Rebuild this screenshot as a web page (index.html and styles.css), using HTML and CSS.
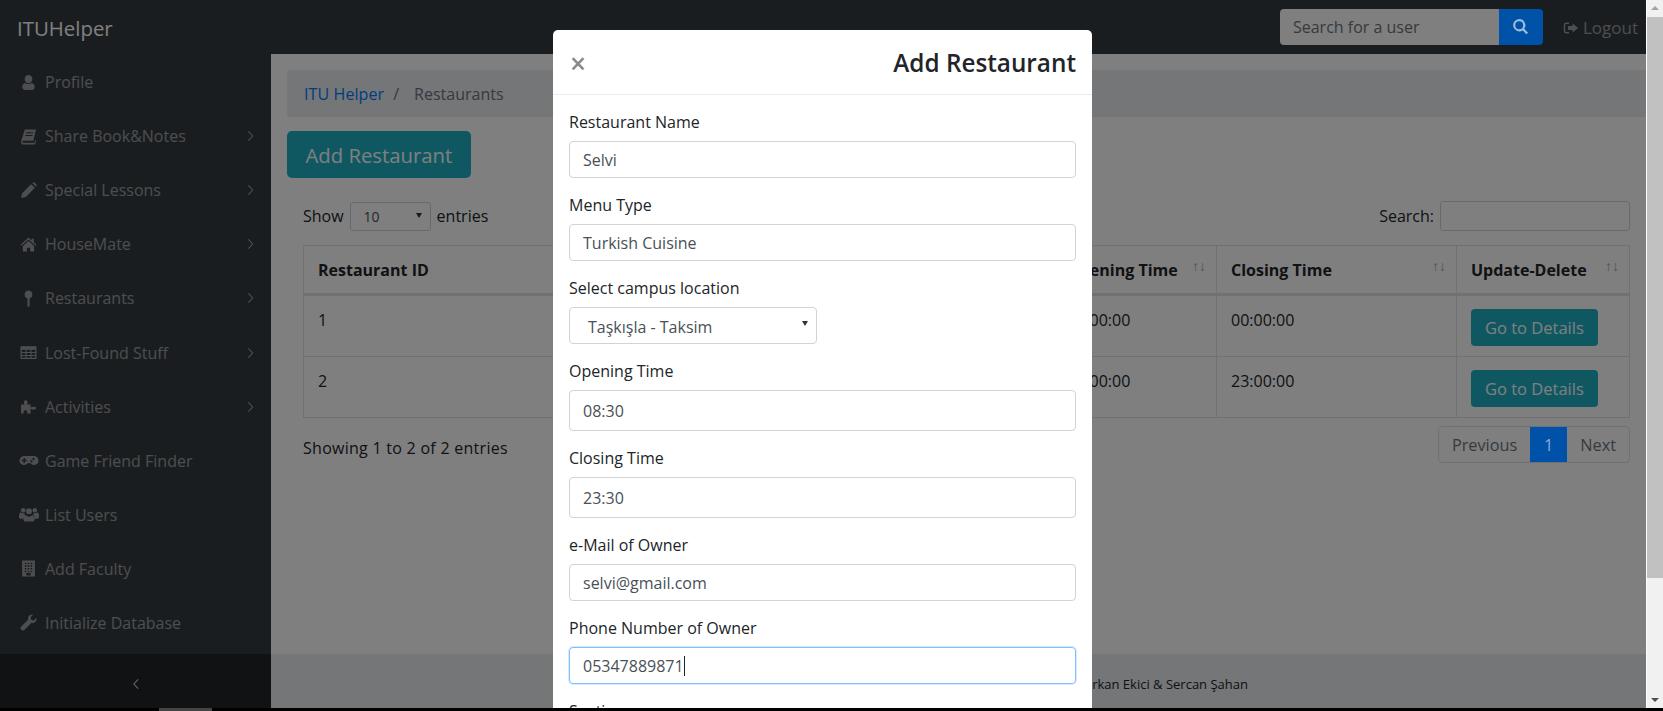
FILE: index.html
```html
<!DOCTYPE html>
<html lang="en">
<head>
    <meta charset="UTF-8">
    <meta name="viewport" content="width=device-width, initial-scale=1.0">
    <title>ITUHelper</title>
    <link rel="stylesheet" href="styles.css">
</head>
<body>
    <svg class="icon-defs" aria-hidden="true">
        <defs>
            <symbol id="i-user" viewBox="0 0 16 16"><path d="M8 1a3.6 3.6 0 0 1 3.6 3.8A3.6 3.6 0 0 1 8 8.6a3.6 3.6 0 0 1-3.6-3.8A3.6 3.6 0 0 1 8 1zM5 8.4c.8.7 1.9 1.1 3 1.1s2.200-.4 3-1.100c1.800.2 2.800 1.500 2.800 3.800 0 1.500-.9 2.800-2.300 2.800H4.500c-1.400 0-2.300-1.300-2.300-2.800 0-2.300 1-3.600 2.800-3.800z"/></symbol>
            <symbol id="i-book" viewBox="0 0 16 16"><path d="M4.500 1.500h10.500l-2.400 10.500H3.300c-.8 0-1.200.5-1.200 1s.4.900 1.200.9h10.400l.6-2.500.8.600-1 3.500H3C1.500 15.500.6 14.300 1 12.800zM6 4l-.3 1h6.600l.3-1zM5.300 6.500l-.3 1h6.600l.3-1z"/></symbol>
            <symbol id="i-pencil" viewBox="0 0 16 16"><path d="M1 15l1-4.500L10.500 2l3.500 3.500L5.500 14zM11.500 1l1-.5c.5-.2 1 0 1.300.3l1.400 1.400c.3.300.5.800.3 1.300l-.5 1z"/></symbol>
            <symbol id="i-home" viewBox="0 0 16 16"><path d="M8 1.500l3 2.700V2.500h2v3.500l2.500 2.300-.7.800L8 3.400 1.200 9.100l-.7-.8zM8 4.800l5.300 4.500V14a.6.6 0 0 1-.6.6H9.500v-3.500h-3v3.500H3.300a.6.6 0 0 1-.6-.6V9.300z"/></symbol>
            <symbol id="i-pin" viewBox="0 0 16 16"><path d="M8 .5a3.800 3.800 0 0 1 1 7.400V15c0 .5-.4.800-1 .8s-1-.3-1-.8V7.900A3.800 3.800 0 0 1 8 .5z"/></symbol>
            <symbol id="i-table" viewBox="0 0 16 16"><path d="M.5 2h15v12H.5zM1.700 5.500v2h3.500v-2zm4.500 0v2h3.600v-2zm4.600 0v2h3.500v-2zM1.700 8.500v1.800h3.500V8.500zm4.500 0v1.800h3.600V8.500zm4.600 0v1.800h3.500V8.500zM1.700 11.300v1.600h3.500v-1.600zm4.500 0v1.600h3.600v-1.600zm4.600 0v1.600h3.500v-1.600z" fill-rule="evenodd"/></symbol>
            <symbol id="i-puzzle" viewBox="0 0 16 16"><path d="M1 6h3.300C3.800 5.300 3.700 4.600 3.700 4c0-1 .7-1.800 1.700-1.800S7.100 3 7.100 4c0 .6-.1 1.300-.6 2h3.500v3c.5-.4 1.200-.6 1.900-.6.600 0 1.300-.3 2.100-.1.600.2 1 .7 1 1.300s-.4 1.100-1 1.300c-.8.200-1.500-.1-2.100-.1-.7 0-1.400-.2-1.900-.6v4.300H6.600c.3-.6.400-1.200.2-1.700-.3-.8-1-1.200-1.700-1.200s-1.400.4-1.700 1.200c-.2.500-.1 1.100.2 1.700H1z"/></symbol>
            <symbol id="i-gamepad" viewBox="0 0 20 16"><path fill-rule="evenodd" d="M5.500 3.500h9a5 5 0 0 1 5 4.500 4.500 4.500 0 0 1-8 2.800H8.500a4.500 4.500 0 0 1-8-2.800 5 5 0 0 1 5-4.500zM4.500 5.500v1.700H2.800v1.500h1.700v1.700H6V8.700h1.700V7.200H6V5.500zM14.500 5.300a1.100 1.100 0 1 0 0 2.200 1.100 1.100 0 0 0 0-2.200zM12.500 7.800a1.100 1.100 0 1 0 0 2.200 1.100 1.100 0 0 0 0-2.200z"/></symbol>
            <symbol id="i-users" viewBox="0 0 20 16"><circle cx="4.200" cy="3.800" r="2.300"/><circle cx="15.800" cy="3.800" r="2.300"/><circle cx="10" cy="4.800" r="3"/><path d="M.5 6.800c.4-.6 1-.8 1.500-.7.800.8 2.600 1 3.500.5-.2 1.200.4 2.400 1.100 3-1.500.4-2.500 1.300-2.800 2.600H1.500C.7 12.200 0 11.500 0 10.500c0-1.500.1-2.800.5-3.700zM19.500 6.800c-.4-.6-1-.8-1.500-.7-.8.8-2.600 1-3.500.5.200 1.200-.4 2.400-1.100 3 1.500.4 2.500 1.300 2.800 2.600h2.300c.8 0 1.500-.7 1.500-1.700 0-1.500-.1-2.800-.5-3.700zM6.700 8.500c.9 1.200 2 1.700 3.300 1.700s2.400-.5 3.300-1.700c1.600.2 2.400 1.800 2.400 3.900 0 1.500-.9 2.600-2.300 2.600H6.600c-1.400 0-2.300-1.100-2.300-2.600 0-2.100.8-3.700 2.400-3.900z"/></symbol>
            <symbol id="i-building" viewBox="0 0 16 16"><path fill-rule="evenodd" d="M2 .5h12v15H2zM4.500 2.500v1.500H6V2.500zm2.700 0v1.500h1.600V2.500zm2.800 0v1.500h1.500V2.500zM4.500 5v1.500H6V5zm2.700 0v1.500h1.600V5zM10 5v1.500h1.500V5zM4.500 7.500V9H6V7.500zm2.700 0V9h1.600V7.500zm2.800 0V9h1.500V7.500zM4.500 10v1.500H6V10zm2.700 0v1.500h1.600V10zm2.800 0v1.500h1.500V10zM6 12.300v2.200h4v-2.200z"/></symbol>
            <symbol id="i-wrench" viewBox="0 0 16 16"><path d="M15.500 3.500c.3 1.300 0 2.800-1 3.800-1 1-2.400 1.300-3.700 1L4 15c-.6.700-1.700.7-2.400.1l-.7-.7c-.6-.7-.6-1.800.1-2.400l6.700-6.800c-.3-1.300 0-2.700 1-3.700 1-1 2.500-1.300 3.800-1l-2.500 2.500.5 2.500 2.500.5z"/></symbol>
            <symbol id="i-search" viewBox="0 0 16 16"><path fill-rule="evenodd" d="M6.800 1a5.800 5.800 0 0 1 4.700 9.200l3.600 3.600-1.500 1.500-3.600-3.600A5.800 5.800 0 1 1 6.800 1zm0 2.100a3.700 3.700 0 1 0 0 7.400 3.700 3.700 0 0 0 0-7.400z"/></symbol>
            <symbol id="i-logout" viewBox="0 0 16 16"><path d="M6 2.500v1.500H3.500c-.8 0-1.300.5-1.300 1.300v5.400c0 .8.500 1.300 1.300 1.300H6v1.500H3.500C1.800 13.500.8 12.500.8 10.800V5.200c0-1.700 1-2.700 2.700-2.700zM9.500 3.500L15.200 8l-5.700 4.500V10H5V6h4.500z"/></symbol>
            <symbol id="i-chevron" viewBox="0 0 8 14"><path d="M1.500 1.500L6.500 7l-5 5.500" fill="none" stroke="currentColor" stroke-width="1.300"/></symbol>
        </defs>
    </svg>

    <div class="window">
        <div class="page">
            <header class="navbar">
                <a class="brand">ITUHelper</a>
                <form class="user-search">
                    <input class="user-search-input" type="text" placeholder="Search for a user">
                    <button class="user-search-btn" type="button"><svg><use href="#i-search"/></svg></button>
                </form>
                <a class="logout"><svg><use href="#i-logout"/></svg>Logout</a>
            </header>

            <div class="main">
                <nav class="sidebar">
                    <ul class="side-list">
                        <li class="side-item"><svg class="side-icon"><use href="#i-user"/></svg>Profile</li>
                        <li class="side-item"><svg class="side-icon"><use href="#i-book"/></svg>Share Book&amp;Notes<svg class="side-arrow"><use href="#i-chevron"/></svg></li>
                        <li class="side-item"><svg class="side-icon"><use href="#i-pencil"/></svg>Special Lessons<svg class="side-arrow"><use href="#i-chevron"/></svg></li>
                        <li class="side-item"><svg class="side-icon"><use href="#i-home"/></svg>HouseMate<svg class="side-arrow"><use href="#i-chevron"/></svg></li>
                        <li class="side-item"><svg class="side-icon"><use href="#i-pin"/></svg>Restaurants<svg class="side-arrow"><use href="#i-chevron"/></svg></li>
                        <li class="side-item"><svg class="side-icon"><use href="#i-table"/></svg>Lost-Found Stuff<svg class="side-arrow"><use href="#i-chevron"/></svg></li>
                        <li class="side-item"><svg class="side-icon"><use href="#i-puzzle"/></svg>Activities<svg class="side-arrow"><use href="#i-chevron"/></svg></li>
                        <li class="side-item"><svg class="side-icon side-icon-wide"><use href="#i-gamepad"/></svg>Game Friend Finder</li>
                        <li class="side-item"><svg class="side-icon side-icon-wide"><use href="#i-users"/></svg>List Users</li>
                        <li class="side-item"><svg class="side-icon"><use href="#i-building"/></svg>Add Faculty</li>
                        <li class="side-item"><svg class="side-icon"><use href="#i-wrench"/></svg>Initialize Database</li>
                    </ul>
                    <div class="side-toggle"><svg><use href="#i-chevron"/></svg></div>
                </nav>

                <div class="content">
                    <div class="content-body">
                        <ol class="breadcrumb">
                            <li class="crumb-link">ITU Helper</li>
                            <li class="crumb-sep">/</li>
                            <li class="crumb-current">Restaurants</li>
                        </ol>
                        <button class="btn-add" type="button">Add Restaurant</button>

                        <div class="table-wrap">
                            <div class="table-top">
                                <div class="entries">Show <span class="entries-select">10<i class="caret"></i></span> entries</div>
                                <div class="table-search">Search: <span class="table-search-box"></span></div>
                            </div>
                            <table class="data-table">
                                <thead>
                                    <tr>
                                        <th class="col-id">Restaurant ID</th>
                                        <th class="col-open">Opening Time<span class="sort">↑↓</span></th>
                                        <th class="col-close">Closing Time<span class="sort">↑↓</span></th>
                                        <th class="col-action">Update-Delete<span class="sort">↑↓</span></th>
                                    </tr>
                                </thead>
                                <tbody>
                                    <tr>
                                        <td>1</td>
                                        <td>00:00:00</td>
                                        <td>00:00:00</td>
                                        <td><button class="btn-details" type="button">Go to Details</button></td>
                                    </tr>
                                    <tr>
                                        <td>2</td>
                                        <td>00:00:00</td>
                                        <td>23:00:00</td>
                                        <td><button class="btn-details" type="button">Go to Details</button></td>
                                    </tr>
                                </tbody>
                            </table>
                            <div class="table-bottom">
                                <div class="table-info">Showing 1 to 2 of 2 entries</div>
                                <div class="pager">
                                    <span class="pager-item">Previous</span>
                                    <span class="pager-item pager-active">1</span>
                                    <span class="pager-item">Next</span>
                                </div>
                            </div>
                        </div>
                    </div>
                    <footer class="footer">Copyright © ITU Helper 2018 - Furkan Ekici &amp; Sercan Şahan</footer>
                </div>
            </div>

            <div class="backdrop"></div>

            <div class="modal">
                <div class="modal-header">
                    <span class="modal-close">×</span>
                    <h2 class="modal-title">Add Restaurant</h2>
                </div>
                <form class="modal-body">
                    <label class="field-label">Restaurant Name</label>
                    <input class="field" type="text" value="Selvi">
                    <label class="field-label">Menu Type</label>
                    <input class="field" type="text" value="Turkish Cuisine">
                    <label class="field-label">Select campus location</label>
                    <div class="field field-select">Taşkışla - Taksim<i class="caret"></i></div>
                    <label class="field-label">Opening Time</label>
                    <input class="field field-tall" type="text" value="08:30">
                    <label class="field-label">Closing Time</label>
                    <input class="field field-tall" type="text" value="23:30">
                    <label class="field-label">e-Mail of Owner</label>
                    <input class="field" type="text" value="selvi@gmail.com">
                    <label class="field-label">Phone Number of Owner</label>
                    <div class="field field-focus">05347889871<span class="text-cursor"></span></div>
                    <label class="field-label">Seating</label>
                </form>
            </div>
        </div>

        <div class="scrollbar">
            <span class="scroll-up"></span>
            <div class="scroll-thumb"></div>
            <span class="scroll-down"></span>
        </div>
    </div>
    <div class="taskbar"><span class="taskbar-item"></span></div>
</body>
</html>
```

FILE: styles.css
```css
* {
    box-sizing: border-box;
}
html, body {
    margin: 0;
    height: 100%;
    overflow: hidden;
}
body {
    display: flex;
    flex-direction: column;
    font-family: "Open Sans", "Noto Sans", sans-serif;
    font-size: 16px;
    color: #212529;
    background: #fff;
}
.icon-defs {
    position: absolute;
    width: 0;
    height: 0;
}
.window {
    flex: 1;
    min-height: 0;
    display: flex;
}
.page {
    position: relative;
    flex: 1;
    min-width: 0;
    display: flex;
    flex-direction: column;
    overflow: hidden;
}
.taskbar {
    height: 3px;
    background: #000;
    padding-left: 159px;
}
.taskbar-item {
    display: block;
    width: 53px;
    height: 3px;
    background: #444;
}

/* navbar */
.navbar {
    height: 54px;
    flex-shrink: 0;
    display: flex;
    align-items: center;
    background: #343a40;
    padding: 0 8px 0 17px;
}
.brand {
    font-size: 20.400px;
    color: #fff;
    margin-right: auto;
    padding-top: 2px;
}
.user-search {
    display: flex;
    height: 36px;
    margin-top: -1px;
    margin-right: 20px;
}
.user-search-input {
    width: 219px;
    border: 0;
    border-radius: 4px 0 0 4px;
    padding: 0 13px;
    font: inherit;
    background: #fff;
}
.user-search-input::placeholder {
    color: #6c757d;
    opacity: 1;
}
/* the bright blues stay above the backdrop, the dimmed value is set here */
.user-search-btn {
    position: relative;
    z-index: 2;
    width: 44px;
    border: 0;
    border-radius: 0 4px 4px 0;
    background: #0052a8;
    padding: 0;
    display: flex;
    align-items: center;
    justify-content: center;
}
.user-search-btn svg {
    width: 17px;
    height: 17px;
    fill: #9dbbdd;
}
.logout {
    display: flex;
    align-items: center;
    gap: 4px;
    font-size: 17px;
    color: rgba(255, 255, 255, .5);
    margin-top: 1px;
}
.logout svg {
    width: 16px;
    height: 16px;
    fill: currentColor;
}

/* sidebar */
.main {
    flex: 1;
    min-height: 0;
    display: flex;
}
.sidebar {
    width: 271px;
    flex-shrink: 0;
    display: flex;
    flex-direction: column;
    background: #343a40;
}
.side-list {
    flex: 1;
    list-style: none;
    margin: 0;
    padding: 1px 0 0;
}
.side-item {
    height: 54.1px;
    display: flex;
    align-items: center;
    padding: 0 17px 0 20px;
    color: rgba(255, 255, 255, .5);
}
.side-icon {
    width: 17px;
    height: 17px;
    margin-right: 8px;
    fill: currentColor;
    flex-shrink: 0;
}
.side-icon-wide {
    width: 20px;
    margin-left: -1px;
    margin-right: 6px;
}
.side-arrow {
    width: 7px;
    height: 12px;
    margin-left: auto;
}
.side-toggle {
    height: 54px;
    padding-top: 5px;
    background: #212529;
    display: flex;
    align-items: center;
    justify-content: center;
    color: rgba(255, 255, 255, .75);
}
.side-toggle svg {
    width: 8px;
    height: 12px;
    transform: scaleX(-1);
}

/* content */
.content {
    flex: 1;
    min-width: 0;
    display: flex;
    flex-direction: column;
    background: #fff;
}
.content-body {
    flex: 1;
    padding: 16px 0 0 16px;
}
.footer {
    height: 54px;
    padding: 5px 398px 0 0;
    background: #e9ecef;
    display: flex;
    align-items: center;
    justify-content: flex-end;
    font-size: 13px;
}
.breadcrumb {
    height: 47px;
    margin: 0 0 14px;
    list-style: none;
    display: flex;
    align-items: center;
    gap: 9px;
    padding: 0 17px;
    background: #e9ecef;
    border-radius: 4px 0 0 4px;
}
.crumb-link {
    color: #007bff;
    letter-spacing: .1px;
}
.crumb-sep,
.crumb-current {
    color: #6c757d;
}
.crumb-current {
    margin-left: 6px;
}
.btn-add {
    display: block;
    height: 47px;
    padding: 0 18.500px;
    border: 0;
    border-radius: 5px;
    background: #1fb0c5;
    color: #fff;
    font: inherit;
    font-size: 20.300px;
}
.table-wrap {
    padding: 0 16px;
}
.table-top {
    display: flex;
    justify-content: space-between;
    align-items: center;
    height: 30px;
    margin-top: 23px;
    margin-bottom: 14px;
}
.entries,
.table-search {
    display: flex;
    align-items: center;
    gap: 6px;
}
.entries-select {
    position: relative;
    width: 81px;
    height: 29px;
    display: flex;
    align-items: center;
    padding-left: 13px;
    border: 1px solid #ced4da;
    border-radius: 3px;
    font-size: 14px;
    color: #495057;
}
.caret {
    position: absolute;
    right: 8px;
    top: 50%;
    margin-top: -3px;
    border: 3px solid transparent;
    border-top: 5px solid #333;
    border-bottom: 0;
}
.table-search-box {
    width: 190px;
    height: 30px;
    border: 1px solid #ced4da;
    border-radius: 3px;
}
.data-table {
    width: 100%;
    border-collapse: collapse;
    table-layout: fixed;
}
.data-table th,
.data-table td {
    border: 1px solid #dee2e6;
    padding: 0 14px;
    text-align: left;
    vertical-align: top;
}
.data-table th {
    position: relative;
    height: 47px;
    padding-top: 1px;
    line-height: 46px;
    border-bottom-width: 3px;
    font-size: 16px;
    white-space: nowrap;
}
.data-table td {
    height: 61.500px;
    padding-top: 13px;
}
.col-id {
    width: 749px;
}
.col-open {
    width: 164px;
}
.col-close {
    width: 240px;
}
.sort {
    position: absolute;
    right: 10px;
    top: -3px;
    font-size: 14px;
    font-weight: 400;
    color: #aaa;
}
.btn-details {
    height: 37px;
    padding: 0 14px;
    border: 0;
    border-radius: 4px;
    background: #1fb0c5;
    color: #fff;
    font: inherit;
    font-size: 16.500px;
}
.table-bottom {
    display: flex;
    justify-content: space-between;
    align-items: flex-start;
    margin-top: 8px;
}
.table-info {
    padding-top: 11px;
    letter-spacing: .27px;
}
.pager {
    display: flex;
    height: 37px;
    border: 1px solid #dee2e6;
    border-radius: 4px;
    font-size: 16.300px;
}
.pager-item {
    padding: 0 13px;
    display: flex;
    align-items: center;
    color: #6c757d;
}
.pager-active {
    position: relative;
    z-index: 2;
    width: 37px;
    justify-content: center;
    background: #0052a8;
    color: #88a8d0;
}

/* modal */
.backdrop {
    position: absolute;
    inset: 0;
    z-index: 1;
    background: rgba(0, 0, 0, .5);
}
.modal {
    position: absolute;
    z-index: 3;
    left: 553px;
    top: 30px;
    width: 539px;
    height: 760px;
    background: #fff;
    border-radius: 5px;
}
.modal-header {
    height: 65px;
    display: flex;
    align-items: center;
    justify-content: space-between;
    padding: 0 16px 0 17px;
    border-bottom: 1px solid #e9ecef;
}
.modal-close {
    font-size: 28px;
    color: #888;
    line-height: 1;
    font-weight: 600;
    padding-top: 1px;
}
.modal-title {
    margin: 0;
    font-size: 24.300px;
    font-weight: 600;
    color: #212529;
}
.modal-body {
    display: flex;
    flex-direction: column;
    margin-top: -.5px;
    padding: 0 16px;
}
.field-label {
    height: 24px;
    display: flex;
    align-items: center;
    margin-top: 15px;
    margin-bottom: 7px;
}
.field {
    width: 100%;
    height: 37px;
    flex-shrink: 0;
    display: flex;
    align-items: center;
    border: 1px solid #ced4da;
    border-radius: 4px;
    padding: 1px 13px 0;
    font: inherit;
    color: #495057;
    outline: 0;
}
.field-tall {
    height: 41px;
}
.field-select {
    position: relative;
    width: 248px;
    padding: 4px 13px 0 18px;
}
.field-select .caret {
    margin-top: -4px;
}
.field-focus {
    border-color: #80bdff;
    box-shadow: 0 0 0 1px rgba(0, 123, 255, .15);
}
.text-cursor {
    width: 1px;
    height: 20px;
    background: #222;
}

/* scrollbar */
.scrollbar {
    width: 17px;
    flex-shrink: 0;
    display: flex;
    flex-direction: column;
    align-items: center;
    background: #f1f1f1;
    border-left: 1px solid #fff;
}
.scroll-up,
.scroll-down {
    flex-shrink: 0;
    margin-top: 6px;
    width: 0;
    height: 0;
    border: 4px solid transparent;
    border-bottom: 4px solid #a3a3a3;
    border-top: 0;
}
.scroll-down {
    margin-top: auto;
    margin-bottom: 6px;
    border-top: 4px solid #505050;
    border-bottom: 0;
}
.scroll-thumb {
    width: 100%;
    height: 561px;
    margin-top: 7px;
    background: #c1c1c1;
}
```
